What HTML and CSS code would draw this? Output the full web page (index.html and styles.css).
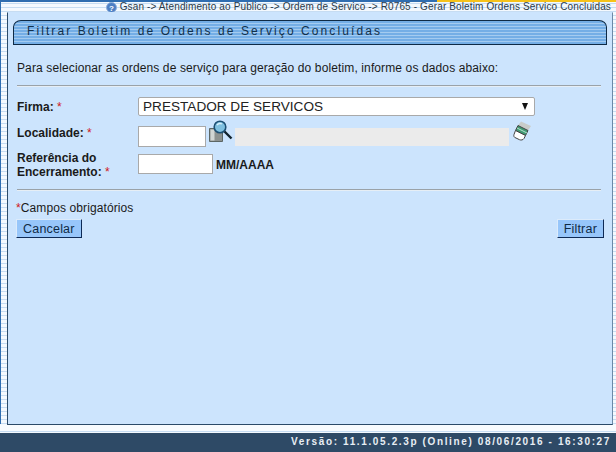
FILE: index.html
```html
<!DOCTYPE html>
<html lang="pt">
<head>
<meta charset="utf-8">
<title>Filtrar Boletim</title>
<link rel="stylesheet" href="styles.css">
</head>
<body>
<div class="page">
  <div class="accent"><div class="accent-blue"></div><div class="accent-yellow"></div></div>
  <div class="crumbs">
    <svg class="help" width="11" height="11" viewBox="0 0 11 11"><circle cx="5.5" cy="5.5" r="5" fill="#4d7fc4" stroke="#8fb0dc"/><text x="5.5" y="8.500" font-size="8" font-weight="700" fill="#fff" text-anchor="middle" font-family="Liberation Sans">?</text></svg>
    <span>Gsan -&gt; Atendimento ao Publico -&gt; Ordem de Servico -&gt; R0765 - Gerar Boletim Ordens Servico Concluidas</span>
  </div>
  <main class="panel">
    <div class="title"><span>Filtrar Boletim de Ordens de Serviço Concluídas</span></div>
    <p class="intro">Para selecionar as ordens de serviço para geração do boletim, informe os dados abaixo:</p>
    <hr class="rule">
    <div class="row row-firma">
      <label class="lab">Firma: <em>*</em></label>
      <div class="select"><span>PRESTADOR DE SERVICOS</span><i class="caret"></i></div>
    </div>
    <div class="row row-local">
      <label class="lab">Localidade: <em>*</em></label>
      <div class="input w-local"></div>
      <svg class="ico-search" width="24" height="24" viewBox="0 0 24 24">
        <path d="M.5 8.500h9l4 4v9H.5z" fill="#8d9290" stroke="#5c6664"/>
        <path d="M1.500 9.500h4v11h-4z" fill="#d2d6d4"/>
        <circle cx="11" cy="7" r="5.800" fill="#7fc0e0" stroke="#1d4f73" stroke-width="1.600"/>
        <path d="M8 5a4 4 0 0 1 5-1" fill="none" stroke="#d9f0fa" stroke-width="1.400"/>
        <path d="M15.500 11.500l7 7" stroke="#11222e" stroke-width="2.400"/>
      </svg>
      <div class="readonly"></div>
      <svg class="ico-eraser" width="19" height="20" viewBox="0 0 19 20">
        <path d="M8 .5L18 5l-3 4.500L5 4.500z" fill="#c8cbc9"/>
        <path d="M5 4.500l10 5-2.500 5-10-5z" fill="#3f9a72" stroke="#444"/>
        <path d="M4 7l10 5" stroke="#b7e0cc"/>
        <path d="M2.500 9.500l10 5-1.500 3c-1 1.600-3 1.800-4.500 1.200l-3.500-1.700C1 16.500.5 15 1 13.500z" fill="#fff" stroke="#444"/>
      </svg>
    </div>
    <div class="row row-ref">
      <label class="lab lab-two">Referência do Encerramento: <em>*</em></label>
      <div class="input w-ref"></div>
      <strong class="hint">MM/AAAA</strong>
    </div>
    <hr class="rule rule-2">
    <p class="req"><em>*</em>Campos obrigatórios</p>
    <div class="actions">
      <button class="btn" type="button">Cancelar</button>
      <button class="btn" type="button">Filtrar</button>
    </div>
  </main>
  <div class="strip"></div>
  <footer class="foot">Versão: 11.1.05.2.3p (Online) 08/06/2016 - 16:30:27</footer>
</div>
</body>
</html>
```

FILE: styles.css
```css
html, body { margin: 0; padding: 0; }
body { font-family: "Liberation Sans", Arial, sans-serif; color: #111; background: #fff; }
.page { width: 616px; height: 452px; display: flex; flex-direction: column; overflow: hidden;
  background: linear-gradient(#2f6db0, #2f6db0) 0 0 / 1px 424px no-repeat,
    repeating-linear-gradient(to bottom, #f4f9fe 0, #f4f9fe 3px, #c6dcf2 3px, #c6dcf2 4px); }
.accent { display: flex; height: 2px; flex: none; }
.accent-blue { width: 437px; background: #2f6db0; }
.accent-yellow { flex: 1; background: #f5c21a; }
.crumbs { height: 10px; flex: none; display: flex; justify-content: flex-end; align-items: center; gap: 2px; padding-right: 5px;
  font-size: 10px; letter-spacing: .135px; line-height: 10px; color: #2a3a48; white-space: nowrap; }
.help { flex: none; margin-right: 1px; }
.panel { flex: none; box-sizing: border-box; height: 413px; margin: 0 3px 0 7px; padding: 7px 5px 0 5px;
  background: #cce4fd; border: 1px solid #2b4a68; border-top-color: #cce4fd; border-right-color: #6b89a6; }
.title { height: 25px; box-sizing: border-box; border: 1px solid #0e2a45; border-radius: 8px 8px 0 0 / 7px 7px 0 0; padding-left: 13px;
  background: repeating-linear-gradient(to bottom, #74aee6 0, #74aee6 2px, #a4cbf0 2px, #a4cbf0 3px);
  font-size: 12px; line-height: 21px; letter-spacing: 2.09px; color: #12304a; }
.intro { margin: 16px 0 0 0; padding-left: 4px; font-size: 12px; letter-spacing: .12px; line-height: 15px; color: #1a1a1a; }
.rule { margin: 9px 6px 0 4px; border: 0; border-top: 1px solid #9aa2a8; border-bottom: 1px solid #e6eef5; height: 0; }
.row { display: flex; margin-left: 4px; font-size: 12px; }
.lab { width: 121px; flex: none; font-weight: 700; color: #1a1a1a; line-height: 14px; }
.lab em, .req em { color: #d01818; font-style: normal; font-weight: 400; }
.row-firma { margin-top: 10px; align-items: center; height: 19px; }
.select { width: 397px; height: 19px; box-sizing: border-box; background: #fff; border: 1px solid #a9a9a9; border-radius: 2px;
  display: flex; justify-content: space-between; align-items: center; padding: 0 6px 0 4px; font-size: 13.600px; color: #222; }
.caret { width: 0; height: 0; border-left: 3.500px solid transparent; border-right: 3.500px solid transparent; border-top: 7px solid #111; }
.row-local { margin-top: 10px; height: 21px; align-items: flex-start; }
.input { box-sizing: border-box; background: #fff; border: 1px solid #a9a9a9; height: 21px; flex: none; }
.w-local { width: 68px; }
.w-ref { width: 75px; height: 20px; }
.ico-search { margin: -6px 0 0 3px; flex: none; }
.readonly { width: 274px; height: 18px; margin: 2px 0 0 2px; background: #ebebeb; flex: none; }
.ico-eraser { margin: -5px 0 0 4px; flex: none; }
.row-ref { margin-top: 7px; height: 28px; align-items: flex-start; }
.lab-two { width: 100px; margin: -3px 21px 0 0; }
.hint { margin: 4px 0 0 3px; line-height: 14px; color: #1a1a1a; }
.rule-2 { margin-top: 7px; }
.req { margin: 10px 0 0 3px; font-size: 12px; letter-spacing: .1px; line-height: 15px; color: #1a1a1a; }
.actions { display: flex; justify-content: space-between; margin: 3px 3px 0 3px; }
.btn { height: 19px; box-sizing: border-box; padding: 0 6px; margin: 0; font-family: inherit; font-size: 12.500px; letter-spacing: .2px; line-height: 14px; color: #0f2a45;
  background: #97c6fa; border: 1px solid; border-color: #dcebfb #0e2a55 #0e2a55 #dcebfb; }
.strip { flex: none; height: 8px; background: linear-gradient(to bottom, #f8fbfe 0, #f8fbfe 6px, #c6dcf2 6px, #c6dcf2 7px, #f4f9fe 7px); }
.foot { flex: 1; background: #2e4a66; color: #e8eef4; font-size: 10px; font-weight: 700; letter-spacing: 1.630px; line-height: 18px; text-align: right; padding-right: 5px; white-space: nowrap; }
```
